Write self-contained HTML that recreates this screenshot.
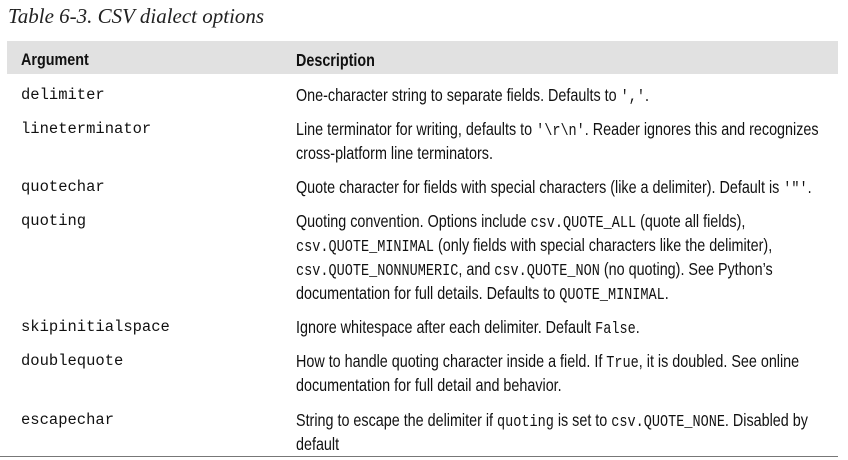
<!DOCTYPE html>
<html><head><meta charset="utf-8"><style>
html,body{margin:0;padding:0;background:#fff;}
body{width:848px;height:460px;position:relative;overflow:hidden;color:#111;}
.t{position:absolute;left:8px;top:4px;font-family:"Liberation Serif",serif;font-style:italic;font-size:21px;color:#222;}
.hd{position:absolute;left:7px;top:41px;width:831px;height:33px;background:#e1e1e1;}
.l{position:absolute;white-space:nowrap;font-family:"Liberation Sans",sans-serif;font-size:16.5px;line-height:20px;}
.c1{left:21px;}
.c2{left:296px;transform:scaleX(0.82);transform-origin:0 0;font-size:17.5px;}
code,.m{font-family:"Liberation Mono",monospace;font-size:15.5px;}
.c2 code{font-size:16.5px;}
.b{font-weight:bold;}
.line{position:absolute;left:0;top:456px;width:838px;height:1px;background:#777;}
</style></head><body>
<div class="t">Table 6-3. CSV dialect options</div>
<div class="hd"></div>
<div class="l c1 b" style="top:50px;transform:scaleX(0.87);transform-origin:0 0">Argument</div>
<div class="l c2 b" style="top:50px">Description</div>

<div class="l c1 m" style="top:85px">delimiter</div>
<div class="l c2" style="top:85px">One-character string to separate fields. Defaults to <code>','</code>.</div>

<div class="l c1 m" style="top:119px">lineterminator</div>
<div class="l c2" style="top:119px">Line terminator for writing, defaults to <code>'\r\n'</code>. Reader ignores this and recognizes</div>
<div class="l c2" style="top:143px">cross-platform line terminators.</div>

<div class="l c1 m" style="top:177px">quotechar</div>
<div class="l c2" style="top:177px">Quote character for fields with special characters (like a delimiter). Default is <code>'"'</code>.</div>

<div class="l c1 m" style="top:211px">quoting</div>
<div class="l c2" style="top:211px">Quoting convention. Options include <code>csv.QUOTE_ALL</code> (quote all fields),</div>
<div class="l c2" style="top:235px"><code>csv.QUOTE_MINIMAL</code> (only fields with special characters like the delimiter),</div>
<div class="l c2" style="top:259px"><code>csv.QUOTE_NONNUMERIC</code>, and <code>csv.QUOTE_NON</code> (no quoting). See Python’s</div>
<div class="l c2" style="top:283px">documentation for full details. Defaults to <code>QUOTE_MINIMAL</code>.</div>

<div class="l c1 m" style="top:317px">skipinitialspace</div>
<div class="l c2" style="top:317px">Ignore whitespace after each delimiter. Default <code>False</code>.</div>

<div class="l c1 m" style="top:351px">doublequote</div>
<div class="l c2" style="top:351px">How to handle quoting character inside a field. If <code>True</code>, it is doubled. See online</div>
<div class="l c2" style="top:375px">documentation for full detail and behavior.</div>

<div class="l c1 m" style="top:410px">escapechar</div>
<div class="l c2" style="top:410px">String to escape the delimiter if <code>quoting</code> is set to <code>csv.QUOTE_NONE</code>. Disabled by</div>
<div class="l c2" style="top:434px">default</div>
<div class="line"></div>
</body></html>
